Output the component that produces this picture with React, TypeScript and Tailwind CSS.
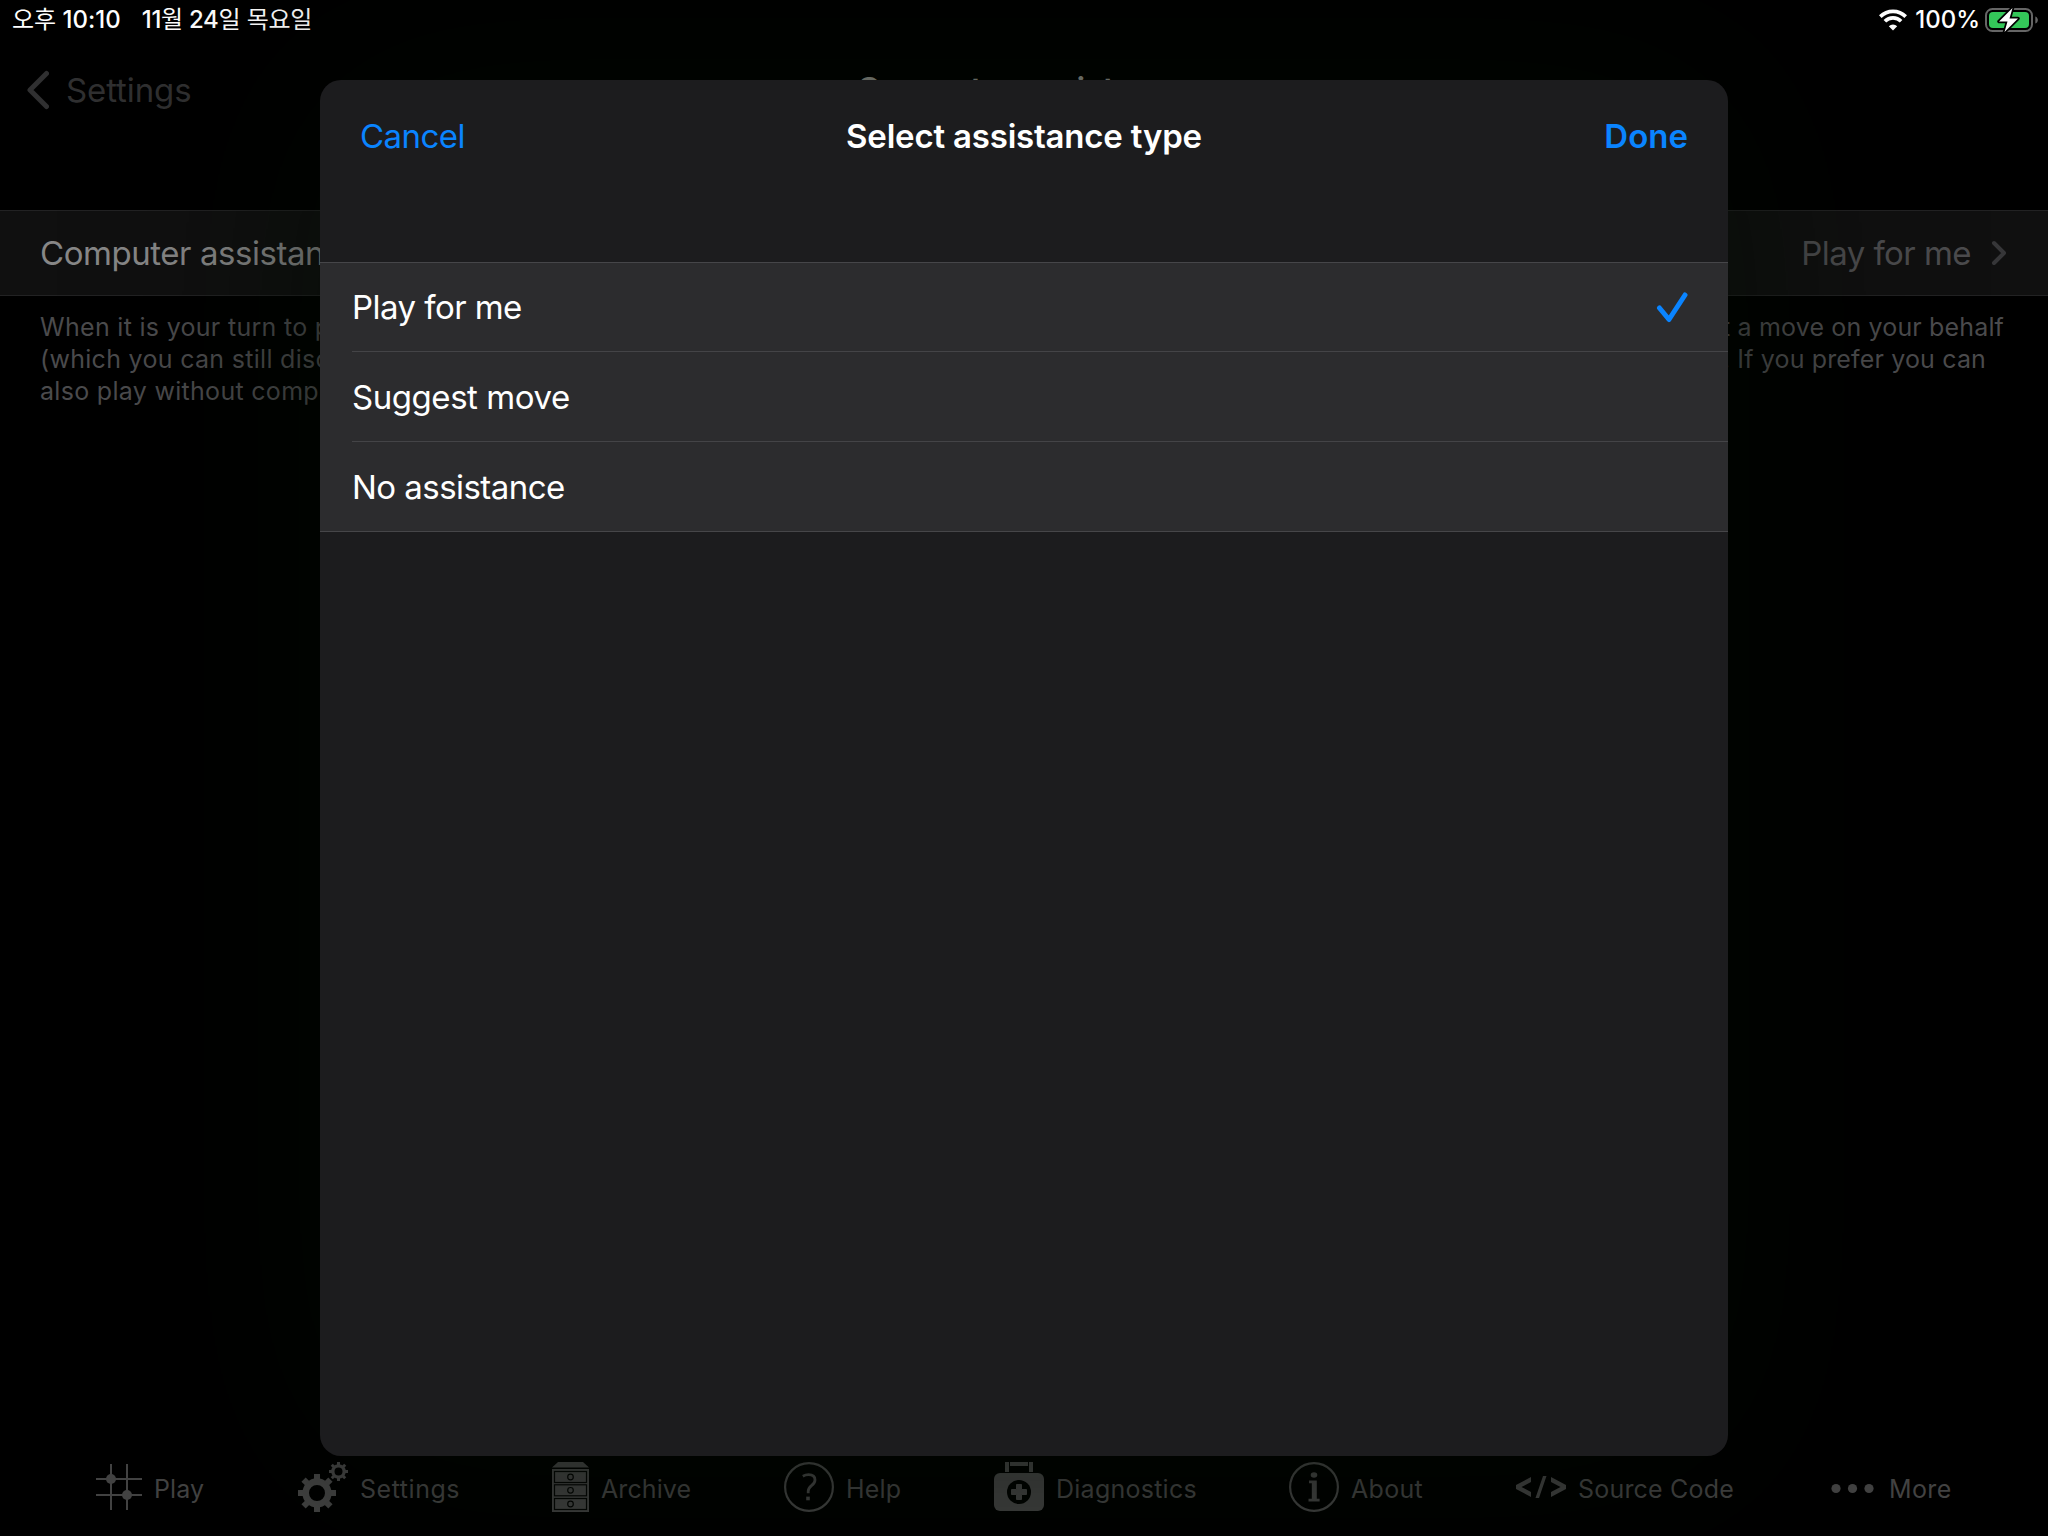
import type { ReactNode } from "react";

type Tab = {
  label: string;
  width: string;
  spacing: string;
  icon: ReactNode;
};

function GridIcon() {
  return (
    <svg width="46" height="50" viewBox="0 0 46 50" fill="none" stroke="currentColor" strokeWidth="2">
      <path d="M15 2v46M31 2v46M0 17h46M0 33h46" />
      <circle cx="15" cy="17" r="5" fill="currentColor" stroke="none" />
      <circle cx="31" cy="33" r="5" fill="currentColor" stroke="none" />
    </svg>
  );
}

function Gear({ cx, cy, r, hole, tooth }: { cx: number; cy: number; r: number; hole: number; tooth: number }) {
  const body = r * 0.77;
  return (
    <g>
      <circle cx={cx} cy={cy} r={(body + hole) / 2} fill="none" stroke="currentColor" strokeWidth={body - hole} />
      {[0, 45, 90, 135, 180, 225, 270, 315].map((angle) => (
        <rect
          key={angle}
          x={cx - tooth / 2}
          y={cy - r}
          width={tooth}
          height={r - body + 1}
          fill="currentColor"
          transform={`rotate(${angle} ${cx} ${cy})`}
        />
      ))}
    </g>
  );
}

function GearsIcon() {
  return (
    <svg width="50" height="50" viewBox="0 0 50 50">
      <Gear cx={19} cy={31} r={19} hole={8} tooth={6} />
      <Gear cx={40.5} cy={9.5} r={9.5} hole={4} tooth={3} />
    </svg>
  );
}

function ArchiveIcon() {
  return (
    <svg width="37" height="50" viewBox="0 0 37 50">
      <path d="M6 0h25l6 5.6H0z" fill="currentColor" />
      <path d="M0 7h37v43H0z" fill="currentColor" />
      {[9.5, 22.8, 36.5].map((y) => (
        <g key={y} fill="none" stroke="#050605" strokeWidth="1.2">
          <rect x="2.5" y={y} width="32" height="11" />
          <circle cx="18.5" cy={y + 5.5} r="2.8" />
        </g>
      ))}
    </svg>
  );
}

function HelpIcon() {
  return (
    <svg width="50" height="50" viewBox="0 0 50 50" fill="none" stroke="currentColor">
      <circle cx="25" cy="25" r="23.9" strokeWidth="2.2" />
      <path d="M18.8 14.2c1.8-1 3.8-1.5 5.8-1.5 4 0 6.4 2 6.4 5.2 0 2.5-1.3 4-3.5 5.8-2.4 2-3.3 3.2-3.3 5.6v2" strokeWidth="2.8" />
      <path d="M24 34.6v3.7" strokeWidth="3.6" />
    </svg>
  );
}

function MedkitIcon() {
  return (
    <svg width="50" height="50" viewBox="0 0 50 50">
      <path d="M11 0h4v10h-4zM35 0h4v10h-4zM16 0h18v4H16z" fill="currentColor" />
      <rect y="11" width="50" height="38" rx="6" fill="currentColor" />
      <circle cx="25" cy="30" r="12" fill="#010200" />
      <path d="M22.500 22.500h5v5h5v5h-5v5h-5v-5h-5v-5h5z" fill="currentColor" stroke="currentColor" strokeLinejoin="round" />
    </svg>
  );
}

function InfoIcon() {
  return (
    <svg width="50" height="50" viewBox="0 0 50 50">
      <circle cx="25" cy="25" r="23.9" fill="none" stroke="currentColor" strokeWidth="2.2" />
      <ellipse cx="25" cy="13" rx="3.3" ry="2.8" fill="currentColor" />
      <path d="M20 18.5h7.8v18.3h2.8V39.5H19.5v-2.7h3.3V21.2H20z" fill="currentColor" />
    </svg>
  );
}

function CodeIcon() {
  return (
    <svg width="50" height="50" viewBox="0 0 50 50" fill="currentColor">
      <path d="M15 15v5L5.5 25l9.500 5v5L0 27v-4zM35 15v5l9.500 5-9.500 5v5l15-8v-4zM27 14h3.500L23 36h-3.500z" />
    </svg>
  );
}

function DotsIcon() {
  return (
    <svg width="46" height="50" viewBox="0 0 46 50" fill="currentColor">
      <circle cx="5" cy="26.500" r="4.600" />
      <circle cx="21.500" cy="26.500" r="4.600" />
      <circle cx="38" cy="26.500" r="4.600" />
    </svg>
  );
}

const tabs: Tab[] = [
  { label: "Play", width: "w-[202px]", spacing: "tracking-[0.1px]", icon: <GridIcon /> },
  { label: "Settings", width: "w-[254px]", spacing: "tracking-[0.55px]", icon: <GearsIcon /> },
  { label: "Archive", width: "w-[232px]", spacing: "tracking-[0.1px]", icon: <ArchiveIcon /> },
  { label: "Help", width: "w-[210px]", spacing: "tracking-[0.2px]", icon: <HelpIcon /> },
  { label: "Diagnostics", width: "w-[295px]", spacing: "tracking-[0.25px]", icon: <MedkitIcon /> },
  { label: "About", width: "w-[227px]", spacing: "tracking-[0.3px]", icon: <InfoIcon /> },
  { label: "Source Code", width: "w-[315px]", spacing: "tracking-[0.2px]", icon: <CodeIcon /> },
  { label: "More", width: "w-[140px]", spacing: "tracking-[0.4px]", icon: <DotsIcon /> },
];

const options = [
  { label: "Play for me", spacing: "tracking-[-0.55px]", row: "h-[89px] border-b", selected: true },
  { label: "Suggest move", spacing: "tracking-[-0.45px]", row: "h-[90px] border-b pt-[2px]", selected: false },
  { label: "No assistance", spacing: "tracking-[-0.55px]", row: "h-[89px] pt-[2px]", selected: false },
];

const footnote = [
  { left: "When it is your turn to play", right: "suggest a move on your behalf", pad: "pr-[44px]" },
  { left: "(which you can still discard)", right: "for you. If you prefer you can", pad: "pr-[62px]" },
  { left: "also play without computer", right: "", pad: "" },
];

function StatusBar() {
  return (
    <div className="flex h-[40px] items-center justify-between pl-[12px] pr-[9px] text-[24px] font-medium leading-none text-white">
      <div className="flex gap-[21px]">
        <span>
          <span className="font-normal">오후</span> 10:10
        </span>
        <span className="tracking-[-0.3px]">
          11<span className="font-normal">월</span> 24<span className="font-normal">일 목요일</span>
        </span>
      </div>
      <div className="flex items-center">
        <svg width="28" height="22" viewBox="0 0 28 22" fill="none" stroke="white" strokeWidth="3.700">
          <path d="M1.300 7.600a18 18 0 0 1 25.400 0" />
          <path d="M5.900 12.300a11.500 11.500 0 0 1 16.200 0" />
          <path d="M14 21.500l-4.200-4.300a6 6 0 0 1 8.400 0z" fill="white" stroke="none" />
        </svg>
        <span className="ml-[8px]">100%</span>
        <svg className="ml-[5px]" width="54" height="26" viewBox="0 0 54 26">
          <rect x="1" y="2" width="46" height="22" rx="6.500" fill="none" stroke="#666" strokeWidth="2" />
          <rect x="4" y="5" width="40" height="16" rx="4" fill="#34c759" />
          <path d="M50.300 9.500c3.400 1 3.400 6 0 7z" fill="#666" />
          <path
            d="M27.500 1L14 14.500h8.500L19.500 25 33 11.500h-8.500z"
            fill="white"
            stroke="black"
            strokeWidth="3.500"
            strokeLinejoin="round"
            paintOrder="stroke"
          />
        </svg>
      </div>
    </div>
  );
}

function AssistanceDialog() {
  return (
    <div className="absolute left-[320px] top-[80px] flex h-[1376px] w-[1408px] flex-col overflow-hidden rounded-[21px] bg-[#1c1c1e] text-[33px] leading-none text-white">
      <div className="grid h-[113px] grid-cols-3 items-center px-[40px]">
        <button className="justify-self-start tracking-[-0.55px] text-[#0a84ff]">Cancel</button>
        <h2 className="justify-self-center whitespace-nowrap font-semibold tracking-[-0.2px]">Select assistance type</h2>
        <button className="justify-self-end font-semibold text-[#0a84ff]">Done</button>
      </div>
      <ul className="mt-[69px] border-y border-[#464649] bg-[#2c2c2e] pl-[32px]">
        {options.map((option) => (
          <li key={option.label} className={`flex items-center justify-between border-[#444447] pr-[40px] ${option.row}`}>
            <span className={option.spacing}>{option.label}</span>
            {option.selected && (
              <svg width="32" height="32" viewBox="0 0 32 32" fill="none" stroke="#0a84ff" strokeWidth="5" strokeLinecap="round" strokeLinejoin="round">
                <path d="M3.500 17l9.500 11.500L29 4" />
              </svg>
            )}
          </li>
        ))}
      </ul>
    </div>
  );
}

export default function App() {
  return (
    <div className="relative flex h-[1536px] w-[2048px] flex-col overflow-hidden bg-black font-['Inter','Noto_Sans_CJK_KR',sans-serif]">
      <StatusBar />

      <header className="grid h-[100px] grid-cols-3 items-center px-[27px] text-[33px] leading-none">
        <div className="flex items-center gap-[17px] text-[#303031]">
          <svg width="22" height="40" viewBox="0 0 22 40" fill="none" stroke="currentColor" strokeWidth="5" strokeLinecap="round" strokeLinejoin="round">
            <path d="M19.500 3.500L3 20l16.500 16.500" />
          </svg>
          <span className="tracking-[-0.1px]">Settings</span>
        </div>
        <h1 className="whitespace-nowrap pb-[2px] text-center font-semibold tracking-[-0.2px] text-[#969690]">Computer assistance</h1>
      </header>

      <div className="mt-[70px] flex h-[86px] items-center justify-between border-y border-[#222223] bg-[#101010] px-[40px] text-[33px] leading-none">
        <span className="tracking-[-0.45px] text-[#878787]">Computer assistance</span>
        <div className="flex items-center gap-[19px] text-[#4b4b4d]">
          <span className="tracking-[-0.55px]">Play for me</span>
          <svg width="18" height="28" viewBox="0 0 18 28" fill="none" stroke="#363638" strokeWidth="4" strokeLinecap="round" strokeLinejoin="round">
            <path d="M4 4l10 10L4 24" />
          </svg>
        </div>
      </div>

      <div className="flex flex-col pl-[40px] pt-[15px] text-[25px] leading-[32px] text-[#4b4b4d]">
        {footnote.map((line) => (
          <p key={line.left} className={`flex justify-between ${line.pad}`}>
            <span className="tracking-[0.3px]">{line.left}</span>
            <span className="tracking-[0.15px]">{line.right}</span>
          </p>
        ))}
      </div>

      <nav className="mb-[24px] mt-auto flex h-[50px] items-center pl-[96px] text-[25px] leading-none text-[#434343]">
        {tabs.map((tab) => (
          <div key={tab.label} className={`flex shrink-0 items-center gap-[12px] ${tab.width}`}>
            {tab.icon}
            <span className={`whitespace-nowrap pt-[5px] ${tab.spacing}`}>{tab.label}</span>
          </div>
        ))}
      </nav>

      {/* soft shade around the dialog */}
      <div className="absolute left-[320px] top-[80px] h-[1376px] w-[1408px] rounded-[21px] shadow-[0_0_220px_rgba(2,11,0,0.66)]" />
      <AssistanceDialog />
    </div>
  );
}
